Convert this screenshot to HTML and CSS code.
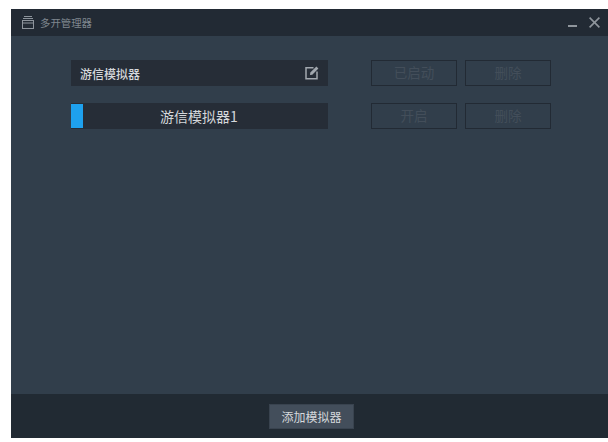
FILE: index.html
```html
<!DOCTYPE html>
<html lang="zh">
<head>
<meta charset="utf-8">
<title>多开管理器</title>
<link rel="stylesheet" href="styles.css">
</head>
<body>
<div class="window">
  <header class="titlebar">
    <svg class="app-icon" width="12" height="13" viewBox="0 0 12 13" fill="none" stroke="#8d949c">
      <path d="M2 .5h8" />
      <path d="M1 2.5h10" />
      <rect x=".5" y="4.5" width="11" height="8" />
      <path d="M.5 7h11" />
    </svg>
    <span class="title">多开管理器</span>
    <svg class="win-min" width="9" height="2" viewBox="0 0 9 2"><rect width="9" height="2" fill="#8f959c"/></svg>
    <svg class="win-close" width="11" height="11" viewBox="0 0 11 11" stroke="#8f959c" stroke-width="1.6"><path d="M.6.6l9.8 9.8M10.4.6L.6 10.4"/></svg>
  </header>
  <main class="content">
    <div class="row">
      <div class="name-box name-edit">
        <span class="name-label">游信模拟器</span>
        <svg class="edit-icon" width="14" height="15" viewBox="0 0 14 15" fill="none">
          <path d="M8.5 2.7H1v11h11V6.5" stroke="#a2a8af" stroke-width="1.5"/>
          <path d="M5 10l.3-2.4L11.4 1.4l2 2L7.3 9.7z" fill="#a2a8af"/>
        </svg>
      </div>
      <div class="actions">
        <button class="btn">已启动</button>
        <button class="btn">删除</button>
      </div>
    </div>
    <div class="row">
      <div class="name-box name-active">
        <span class="marker"></span>
        <span class="active-label">游信模拟器1</span>
      </div>
      <div class="actions">
        <button class="btn">开启</button>
        <button class="btn">删除</button>
      </div>
    </div>
  </main>
  <footer class="footer">
    <button class="add-btn">添加模拟器</button>
  </footer>
</div>
</body>
</html>
```
FILE: styles.css
```css
* { box-sizing: border-box; }
html, body { margin: 0; height: 100%; background: #fff; overflow: hidden; }
body { padding: 9px 0 4px 11px; font-family: "Noto Sans CJK SC", "Liberation Sans", sans-serif; }
.window { height: 429px; display: flex; flex-direction: column; background: #313e4b; }
.titlebar { height: 27px; flex: none; display: flex; align-items: center; padding: 0 8px 0 11px; background: #222a34; }
.app-icon { flex: none; }
.title { margin-left: 6px; font-size: 10.4px; color: #7f868e; flex: 1; }
.win-min { margin-right: 12px; margin-top: 6px; }
.win-close { margin-top: -1px; }
.content { flex: 1; padding: 24px 0 0 60px; display: flex; flex-direction: column; gap: 17px; }
.row { display: flex; height: 26px; }
.name-box { width: 257px; height: 26px; background: #262d37; display: flex; align-items: center; }
.name-edit { padding: 0 9px 0 9px; justify-content: space-between; }
.name-label { font-size: 12px; font-weight: 500; color: #d5d8db; }
.edit-icon { flex: none; margin-top: -1px; }
.marker { width: 12px; height: 24px; background: #1ea1ee; flex: none; }
.active-label { flex: 1; text-align: center; font-size: 14px; color: #d5d8db; padding-right: 13px; }
.actions { display: flex; gap: 8px; margin-left: 43px; }
.btn { width: 86px; height: 26px; padding: 0 0 2px; background: transparent; border: 1px solid #222a34; font: inherit; font-size: 13.5px; color: #434e5a; }
.footer { height: 44px; flex: none; display: flex; justify-content: center; align-items: center; padding-left: 4px; background: #212a33; }
.add-btn { width: 85px; height: 25px; padding: 0; background: #434e5b; border: 1px solid #39434f; font: inherit; font-size: 12px; color: #d5d8db; margin-top: 1px; }
```
